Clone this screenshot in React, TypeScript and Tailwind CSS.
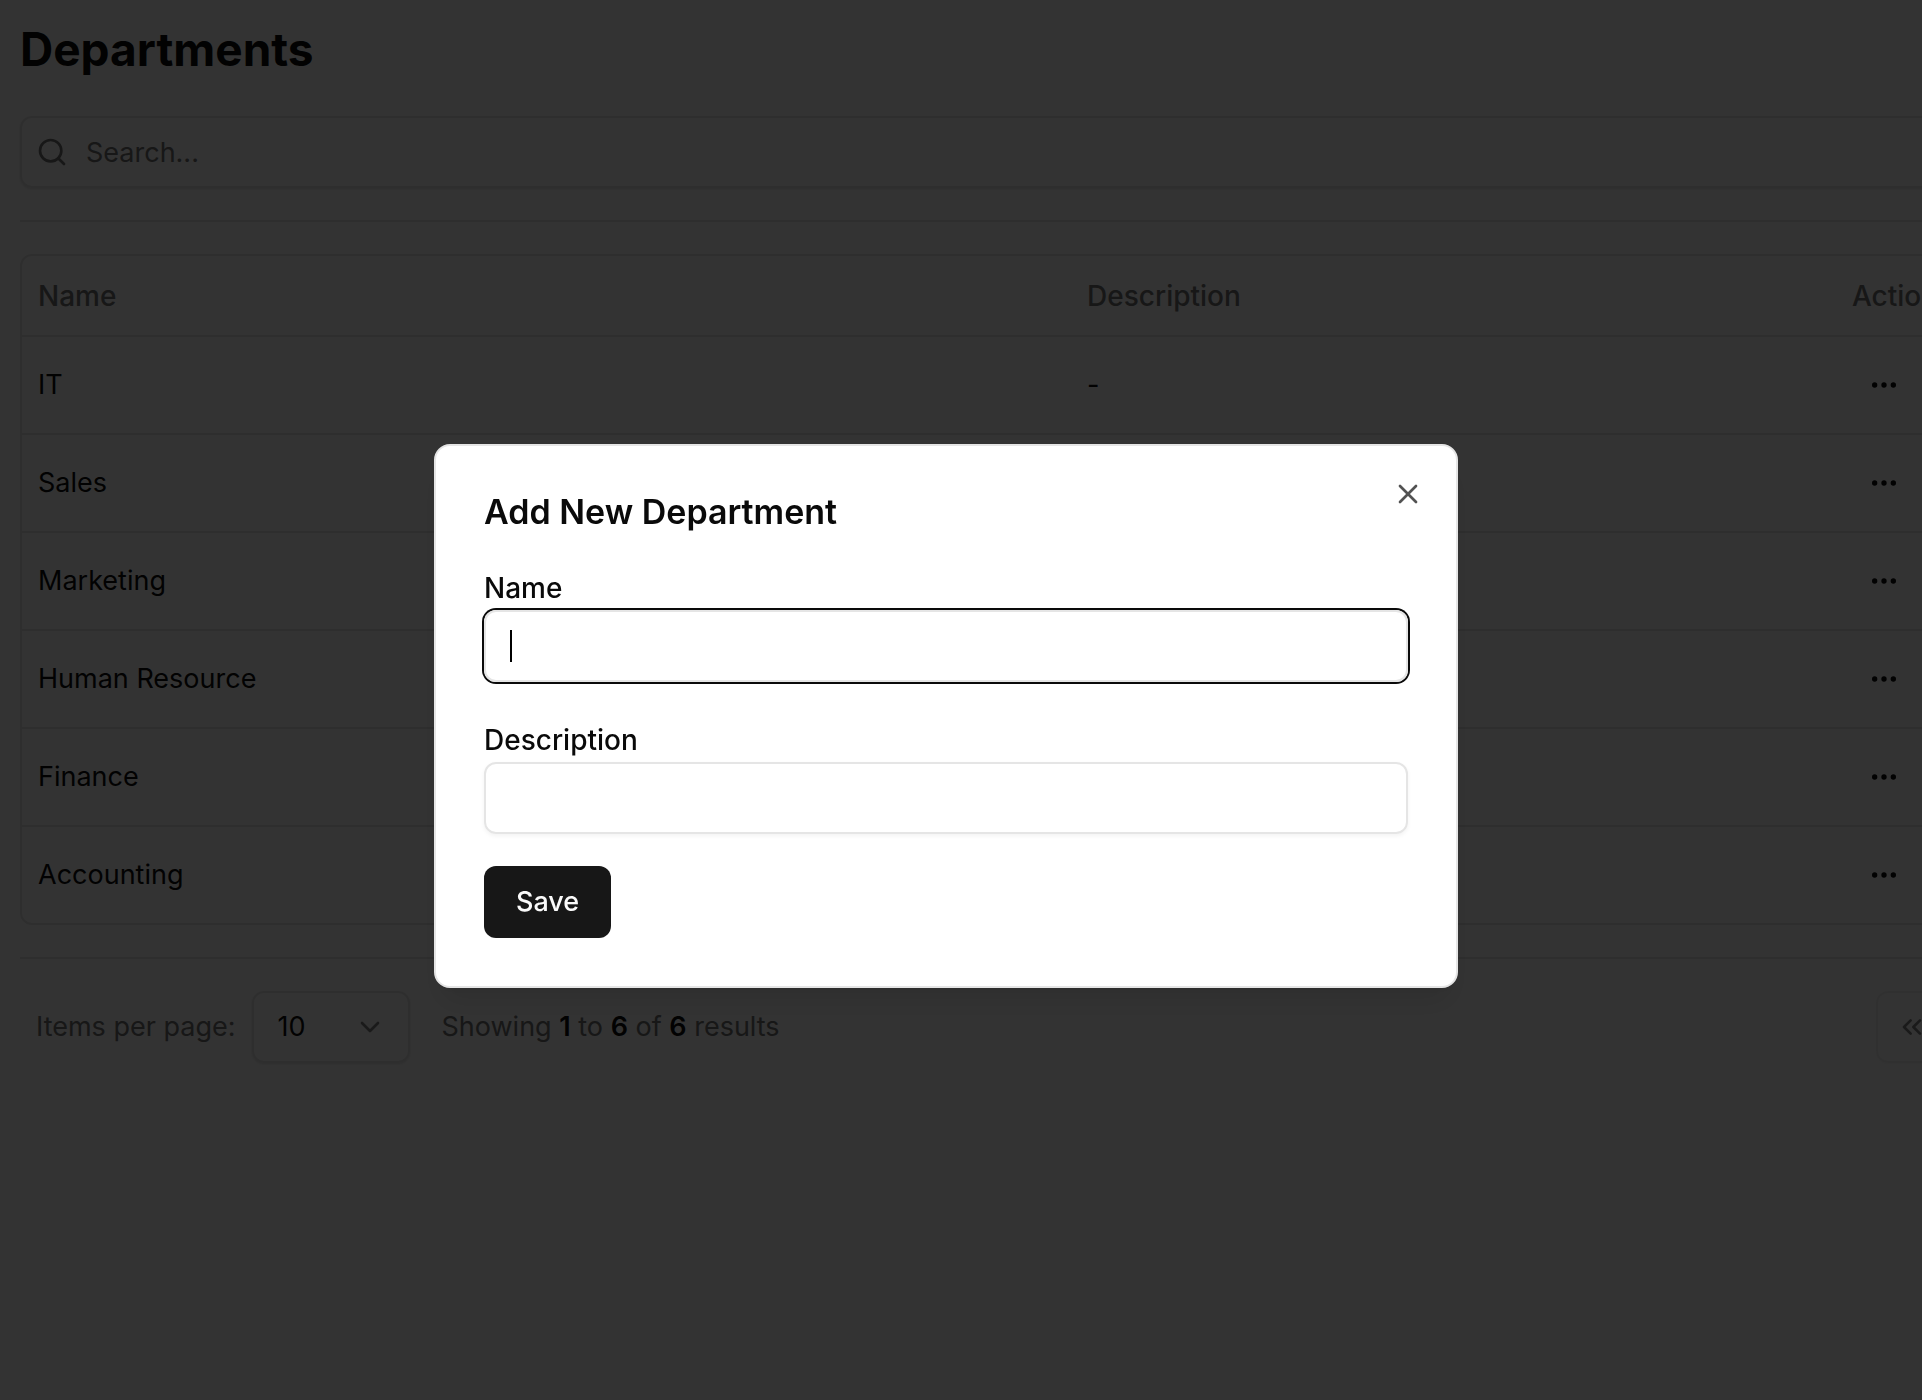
import React, { useState } from "react";
import {
  ChevronDown,
  ChevronLeft,
  ChevronRight,
  ChevronsLeft,
  ChevronsRight,
  Ellipsis,
  Search,
  X,
} from "lucide-react";

interface Department {
  name: string;
  description?: string;
}

const departments: Department[] = [
  { name: "IT" },
  { name: "Sales" },
  { name: "Marketing" },
  { name: "Human Resource" },
  { name: "Finance" },
  { name: "Accounting" },
];

function DepartmentsTable() {
  return (
    <div className="rounded-xl border-2 border-neutral-200">
      <table className="w-full table-fixed border-separate border-spacing-0 text-left">
        <thead>
          <tr className="h-[81px] text-[28px] text-neutral-500">
            <th className="w-[47.6%] border-b-2 border-neutral-200 px-4 font-medium">Name</th>
            <th className="w-[34.7%] border-b-2 border-neutral-200 px-4 font-medium">Description</th>
            <th className="border-b-2 border-neutral-200 px-4 font-medium">Actions</th>
          </tr>
        </thead>
        <tbody className="[&>tr:not(:last-child)>td]:border-b-2">
          {departments.map((department) => (
            <tr key={department.name}>
              <td className="border-neutral-200 p-4">{department.name}</td>
              <td className="border-neutral-200 p-4">{department.description || "-"}</td>
              <td className="border-neutral-200 p-4">
                <button
                  type="button"
                  aria-label={`Actions for ${department.name}`}
                  className="flex size-16 items-center justify-center rounded-xl"
                >
                  <Ellipsis className="size-8" />
                </button>
              </td>
            </tr>
          ))}
        </tbody>
      </table>
    </div>
  );
}

function Pagination() {
  const total = departments.length;
  const buttonClass =
    "flex size-18 items-center justify-center rounded-xl border-2 border-neutral-200 shadow-xs disabled:opacity-50";

  return (
    <div className="flex items-center justify-between px-4 text-neutral-500">
      <div className="flex items-center gap-8">
        <div className="flex items-center gap-4">
          <label htmlFor="page-size">Items per page:</label>
          <div className="relative">
            <select
              id="page-size"
              defaultValue="10"
              className="h-18 w-[158px] appearance-none rounded-xl border-2 border-neutral-200 px-6 text-neutral-950 shadow-sm"
            >
              <option value="10">10</option>
              <option value="20">20</option>
              <option value="50">50</option>
            </select>
            <ChevronDown className="pointer-events-none absolute top-5 right-6 size-8 text-neutral-950 opacity-50" />
          </div>
        </div>
        <p>
          Showing <span className="font-semibold text-neutral-950">1</span> to{" "}
          <span className="font-semibold text-neutral-950">{total}</span> of{" "}
          <span className="font-semibold text-neutral-950">{total}</span> results
        </p>
      </div>

      <div className="flex gap-4 text-neutral-950">
        <button type="button" aria-label="First page" disabled className={buttonClass}>
          <ChevronsLeft className="size-8" />
        </button>
        <button type="button" aria-label="Previous page" disabled className={buttonClass}>
          <ChevronLeft className="size-8" />
        </button>
        <button type="button" aria-label="Next page" disabled className={buttonClass}>
          <ChevronRight className="size-8" />
        </button>
        <button type="button" aria-label="Last page" disabled className={buttonClass}>
          <ChevronsRight className="size-8" />
        </button>
      </div>
    </div>
  );
}

function AddDepartmentDialog({ onClose }: { onClose: () => void }) {
  const [name, setName] = useState("");
  const [description, setDescription] = useState("");

  const handleSubmit = (e: React.FormEvent) => {
    e.preventDefault();
    onClose();
  };

  return (
    <div className="fixed inset-0 flex items-center justify-center bg-black/80 pt-8 pr-[30px]">
      <div
        role="dialog"
        aria-modal="true"
        aria-labelledby="dialog-title"
        className="relative w-full max-w-5xl rounded-2xl border-2 border-neutral-200 bg-white p-12 shadow-[0_20px_30px_-6px_rgba(0,0,0,0.1),0_8px_12px_-8px_rgba(0,0,0,0.1)]"
      >
        <h2 id="dialog-title" className="mb-8 text-[34px] leading-9 font-semibold">
          Add New Department
        </h2>

        <form onSubmit={handleSubmit} className="flex flex-col gap-8">
          <div>
            <label htmlFor="name" className="block pt-1 text-[28px] leading-11 font-medium">
              Name
            </label>
            <div className="relative">
              <input
                id="name"
                type="text"
                value={name}
                onChange={(e) => setName(e.target.value)}
                className="block h-18 w-full rounded-xl border-2 border-neutral-200 px-6 caret-transparent ring-2 ring-neutral-950 outline-none"
              />
              {name === "" && (
                <span className="pointer-events-none absolute top-5 left-[26px] h-8 w-0.5 bg-black" />
              )}
            </div>
          </div>

          <div>
            <label htmlFor="description" className="block pt-1 text-[28px] leading-11 font-medium">
              Description
            </label>
            <input
              id="description"
              type="text"
              value={description}
              onChange={(e) => setDescription(e.target.value)}
              className="block h-18 w-full rounded-xl border-2 border-neutral-200 px-6 shadow-[0_2px_4px_rgba(0,0,0,0.05)] outline-none"
            />
          </div>

          <button
            type="submit"
            className="h-18 self-start rounded-xl bg-neutral-900 px-8 font-medium text-neutral-50"
          >
            Save
          </button>
        </form>

        <button
          type="button"
          aria-label="Close"
          onClick={onClose}
          className="absolute top-8 right-8 opacity-70"
        >
          <X className="size-8" />
        </button>
      </div>
    </div>
  );
}

export default function App() {
  const [open, setOpen] = useState(true);

  return (
    <div className="min-h-screen overflow-hidden bg-white font-['Inter','Liberation_Sans',sans-serif] text-[27px] leading-10 text-neutral-950">
      {/* the list is wider than the window and runs off its right edge */}
      <main className="w-[calc(100%+326px)] p-5">
        <h1 className="mb-[38px] text-[46px] leading-[58px] font-bold">Departments</h1>

        <div className="relative">
          <Search className="absolute top-5 left-4 size-8 text-neutral-500" />
          <input
            type="search"
            aria-label="Search departments"
            placeholder="Search..."
            className="block h-18 w-full rounded-xl border-2 border-neutral-200 pr-6 pl-16 shadow-sm outline-none placeholder:text-neutral-500"
          />
        </div>

        <hr className="my-8 border-t-2 border-neutral-200" />
        <DepartmentsTable />
        <hr className="my-8 border-t-2 border-neutral-200" />
        <Pagination />
      </main>

      {open && <AddDepartmentDialog onClose={() => setOpen(false)} />}
    </div>
  );
}
